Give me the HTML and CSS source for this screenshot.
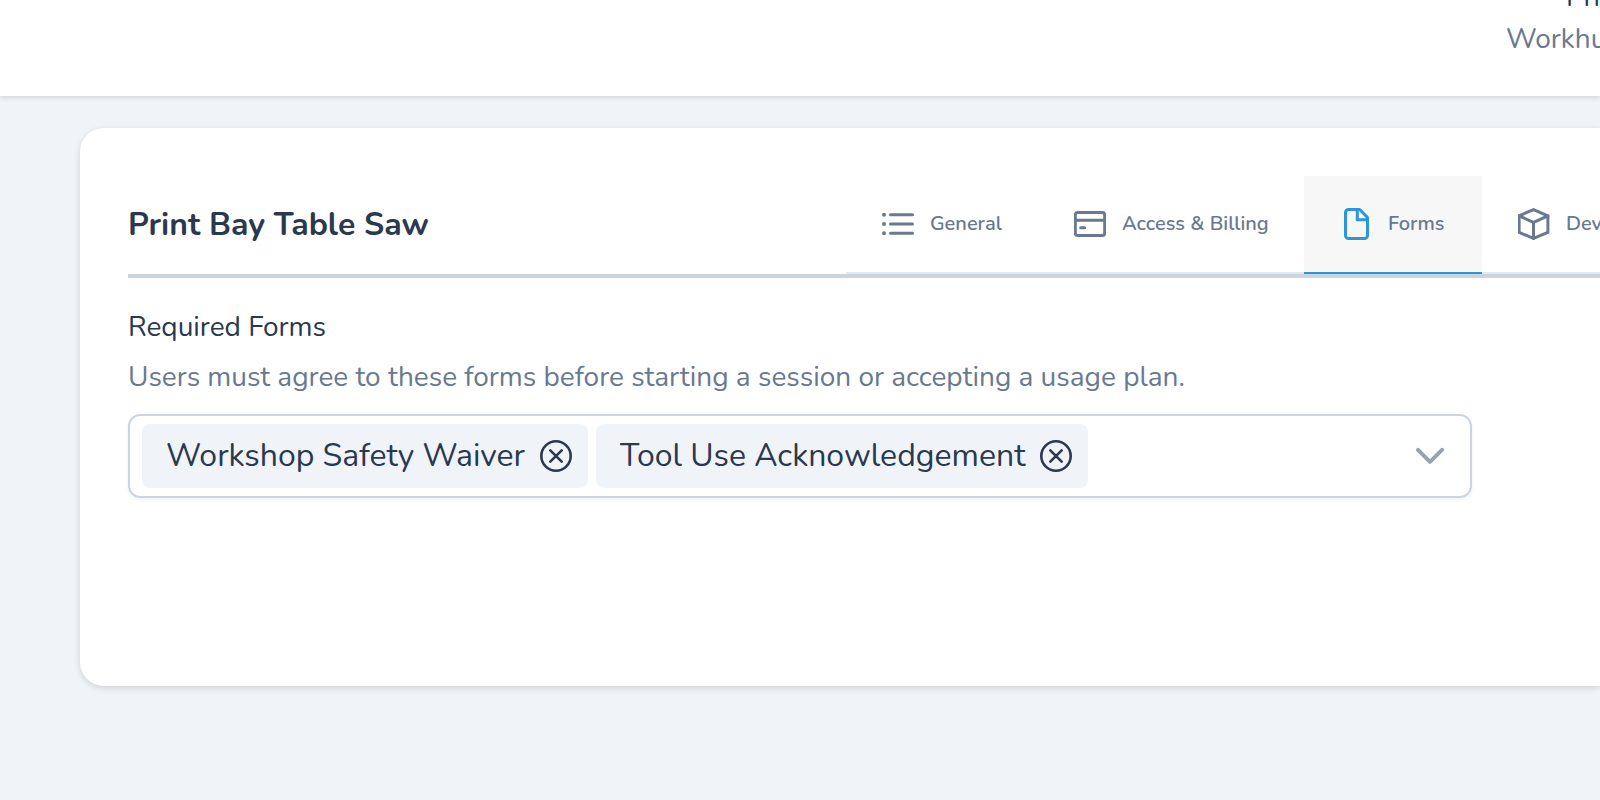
FILE: index.html
```html
<!DOCTYPE html>
<html lang="en">
<head>
    <meta charset="utf-8">
    <meta name="viewport" content="width=device-width, initial-scale=1">
    <title>Print Bay Table Saw</title>
    <link rel="stylesheet" href="styles.css">
</head>
<body>
    <header class="topbar">
        <div class="account">
            <div class="account-name">Print</div>
            <div class="account-org">Workhub</div>
        </div>
    </header>

    <main class="card">
        <div class="card-header">
            <h1>Print Bay Table Saw</h1>
            <nav class="tabs">
                <a class="tab" href="#general">
                    <svg class="icon" viewBox="0 0 32 32">
                        <path d="M8.5 6.8h22M8.5 16h22M8.5 25.2h22"/>
                        <path class="dots" d="M2 6.8h.01M2 16h.01M2 25.2h.01"/>
                    </svg>
                    General
                </a>
                <a class="tab tab-wide" href="#access">
                    <svg class="icon" viewBox="0 0 32 32">
                        <rect x="1.3" y="4.6" width="29.4" height="23" rx="2.4"/>
                        <path d="M1.3 12.2h29.4"/>
                        <path d="M6.7 19.7h4"/>
                    </svg>
                    Access &amp; Billing
                </a>
                <a class="tab tab-active" href="#forms" aria-current="page">
                    <svg class="icon" viewBox="0 0 32 32">
                        <path d="M5.5 4.5a3 3 0 0 1 3-3h11.2l7.8 8v18a3 3 0 0 1-3 3h-16a3 3 0 0 1-3-3z"/>
                        <path d="M17.3 1.8v9.9h10"/>
                    </svg>
                    Forms
                </a>
                <a class="tab" href="#devices">
                    <svg class="icon" viewBox="0 0 32 32">
                        <path d="M15.5 1.6 29.9 7.8v16.6L15.5 30.4 1.1 24.4V7.8z"/>
                        <path d="M1.1 7.8 15.5 14.4l14.4-6.6M15.5 14.4v16"/>
                    </svg>
                    Devices
                </a>
            </nav>
        </div>

        <section class="field">
            <label for="required-forms">Required Forms</label>
            <p id="forms-help">Users must agree to these forms before starting a session or accepting a usage plan.</p>
            <div class="select">
                <span class="tag">
                    Workshop Safety Waiver
                    <button type="button" aria-label="Remove Workshop Safety Waiver">
                        <svg class="icon" viewBox="0 0 32 32">
                            <circle cx="16" cy="16" r="14.7"/>
                            <path d="M10.3 10.3 21.7 21.7M21.7 10.3 10.3 21.7"/>
                        </svg>
                    </button>
                </span>
                <span class="tag">
                    Tool Use Acknowledgement
                    <button type="button" aria-label="Remove Tool Use Acknowledgement">
                        <svg class="icon" viewBox="0 0 32 32">
                            <circle cx="16" cy="16" r="14.7"/>
                            <path d="M10.3 10.3 21.7 21.7M21.7 10.3 10.3 21.7"/>
                        </svg>
                    </button>
                </span>
                <input type="text" id="required-forms" aria-describedby="forms-help">
                <button type="button" class="toggle" aria-label="Show forms">
                    <svg class="icon" viewBox="0 0 32 32">
                        <path d="M4 9.8 16 21.8 28 9.8"/>
                    </svg>
                </button>
            </div>
        </section>
    </main>
</body>
</html>
```
FILE: styles.css
```css
* {
    box-sizing: border-box;
}
body {
    display: flow-root;
    min-height: 100vh;
    margin: 0;
    background: #f0f4f9;
    color: #2b394f;
    font-family: Nunito, "Open Sans", sans-serif;
    font-size: 28px;
    line-height: 42px;
}
h1, p {
    margin: 0;
}
button {
    display: flex;
    padding: 0;
    border: none;
    background: none;
    color: inherit;
    cursor: pointer;
}
.icon {
    flex: none;
    width: 32px;
    height: 32px;
    fill: none;
    stroke: currentColor;
    stroke-width: 3;
    stroke-linecap: round;
    stroke-linejoin: round;
}
.icon .dots {
    stroke-width: 4;
}

/* top bar */
.topbar {
    display: flex;
    justify-content: flex-end;
    align-items: flex-end;
    height: 96px;
    padding-bottom: 36px;
    overflow: hidden;
    background: white;
    box-shadow: 0 2px 4px rgba(0, 0, 0, 0.12);
}
.account {
    width: 94px;
    white-space: nowrap;
}
.account-name {
    padding-left: 60px;
}
.account-org {
    color: #69798f;
}

/* card */
.card {
    min-height: 558px;
    margin: 32px 0 0 80px;
    padding: 48px 0 48px 48px;
    background: white;
    border-radius: 24px 0 0 24px;
    box-shadow: 0 2px 6px rgba(0, 0, 0, 0.14);
}
.card-header {
    display: flex;
    justify-content: space-between;
    align-items: center;
    border-bottom: 4px solid #cbd5e0;
}
h1 {
    font-size: 32px;
    font-weight: 700;
}
.tabs {
    display: flex;
    width: 754px;
    overflow: hidden;
}
.tab {
    display: flex;
    flex: none;
    align-items: center;
    gap: 16px;
    width: 192px;
    height: 98px;
    padding: 0 36px;
    border-bottom: 2px solid #e2e8f0;
    color: #69798f;
    font-size: 20px;
    font-weight: 600;
    text-decoration: none;
    white-space: nowrap;
}
.tab-wide {
    width: 266px;
}
.tab-active {
    width: 178px;
    background: #f7f7f7;
    border-bottom-color: #2b95de;
}
.tab-active .icon {
    color: #2b95de;
}

/* required forms */
.field {
    display: flex;
    flex-direction: column;
    gap: 8px;
    max-width: 1344px;
    padding-top: 28px;
}
.field p {
    color: #69798f;
}
.select {
    display: flex;
    align-items: center;
    gap: 8px;
    margin-top: 8px;
    padding: 8px 24px 8px 12px;
    border: 2px solid #cbd5e0;
    border-radius: 12px;
    box-shadow: 0 2px 4px rgba(0, 0, 0, 0.05);
}
.tag {
    display: flex;
    align-items: center;
    gap: 15px;
    height: 64px;
    padding: 0 16px 0 24px;
    background: #f0f4f9;
    border-radius: 8px;
    font-size: 32px;
    white-space: nowrap;
}
.tag .icon {
    stroke-width: 2.6;
}
.select input {
    flex: 1;
    min-width: 0;
    border: none;
    outline: none;
    background: none;
    font: inherit;
}
.toggle {
    color: #97a3b0;
}
.toggle .icon {
    stroke-width: 4;
}
```
